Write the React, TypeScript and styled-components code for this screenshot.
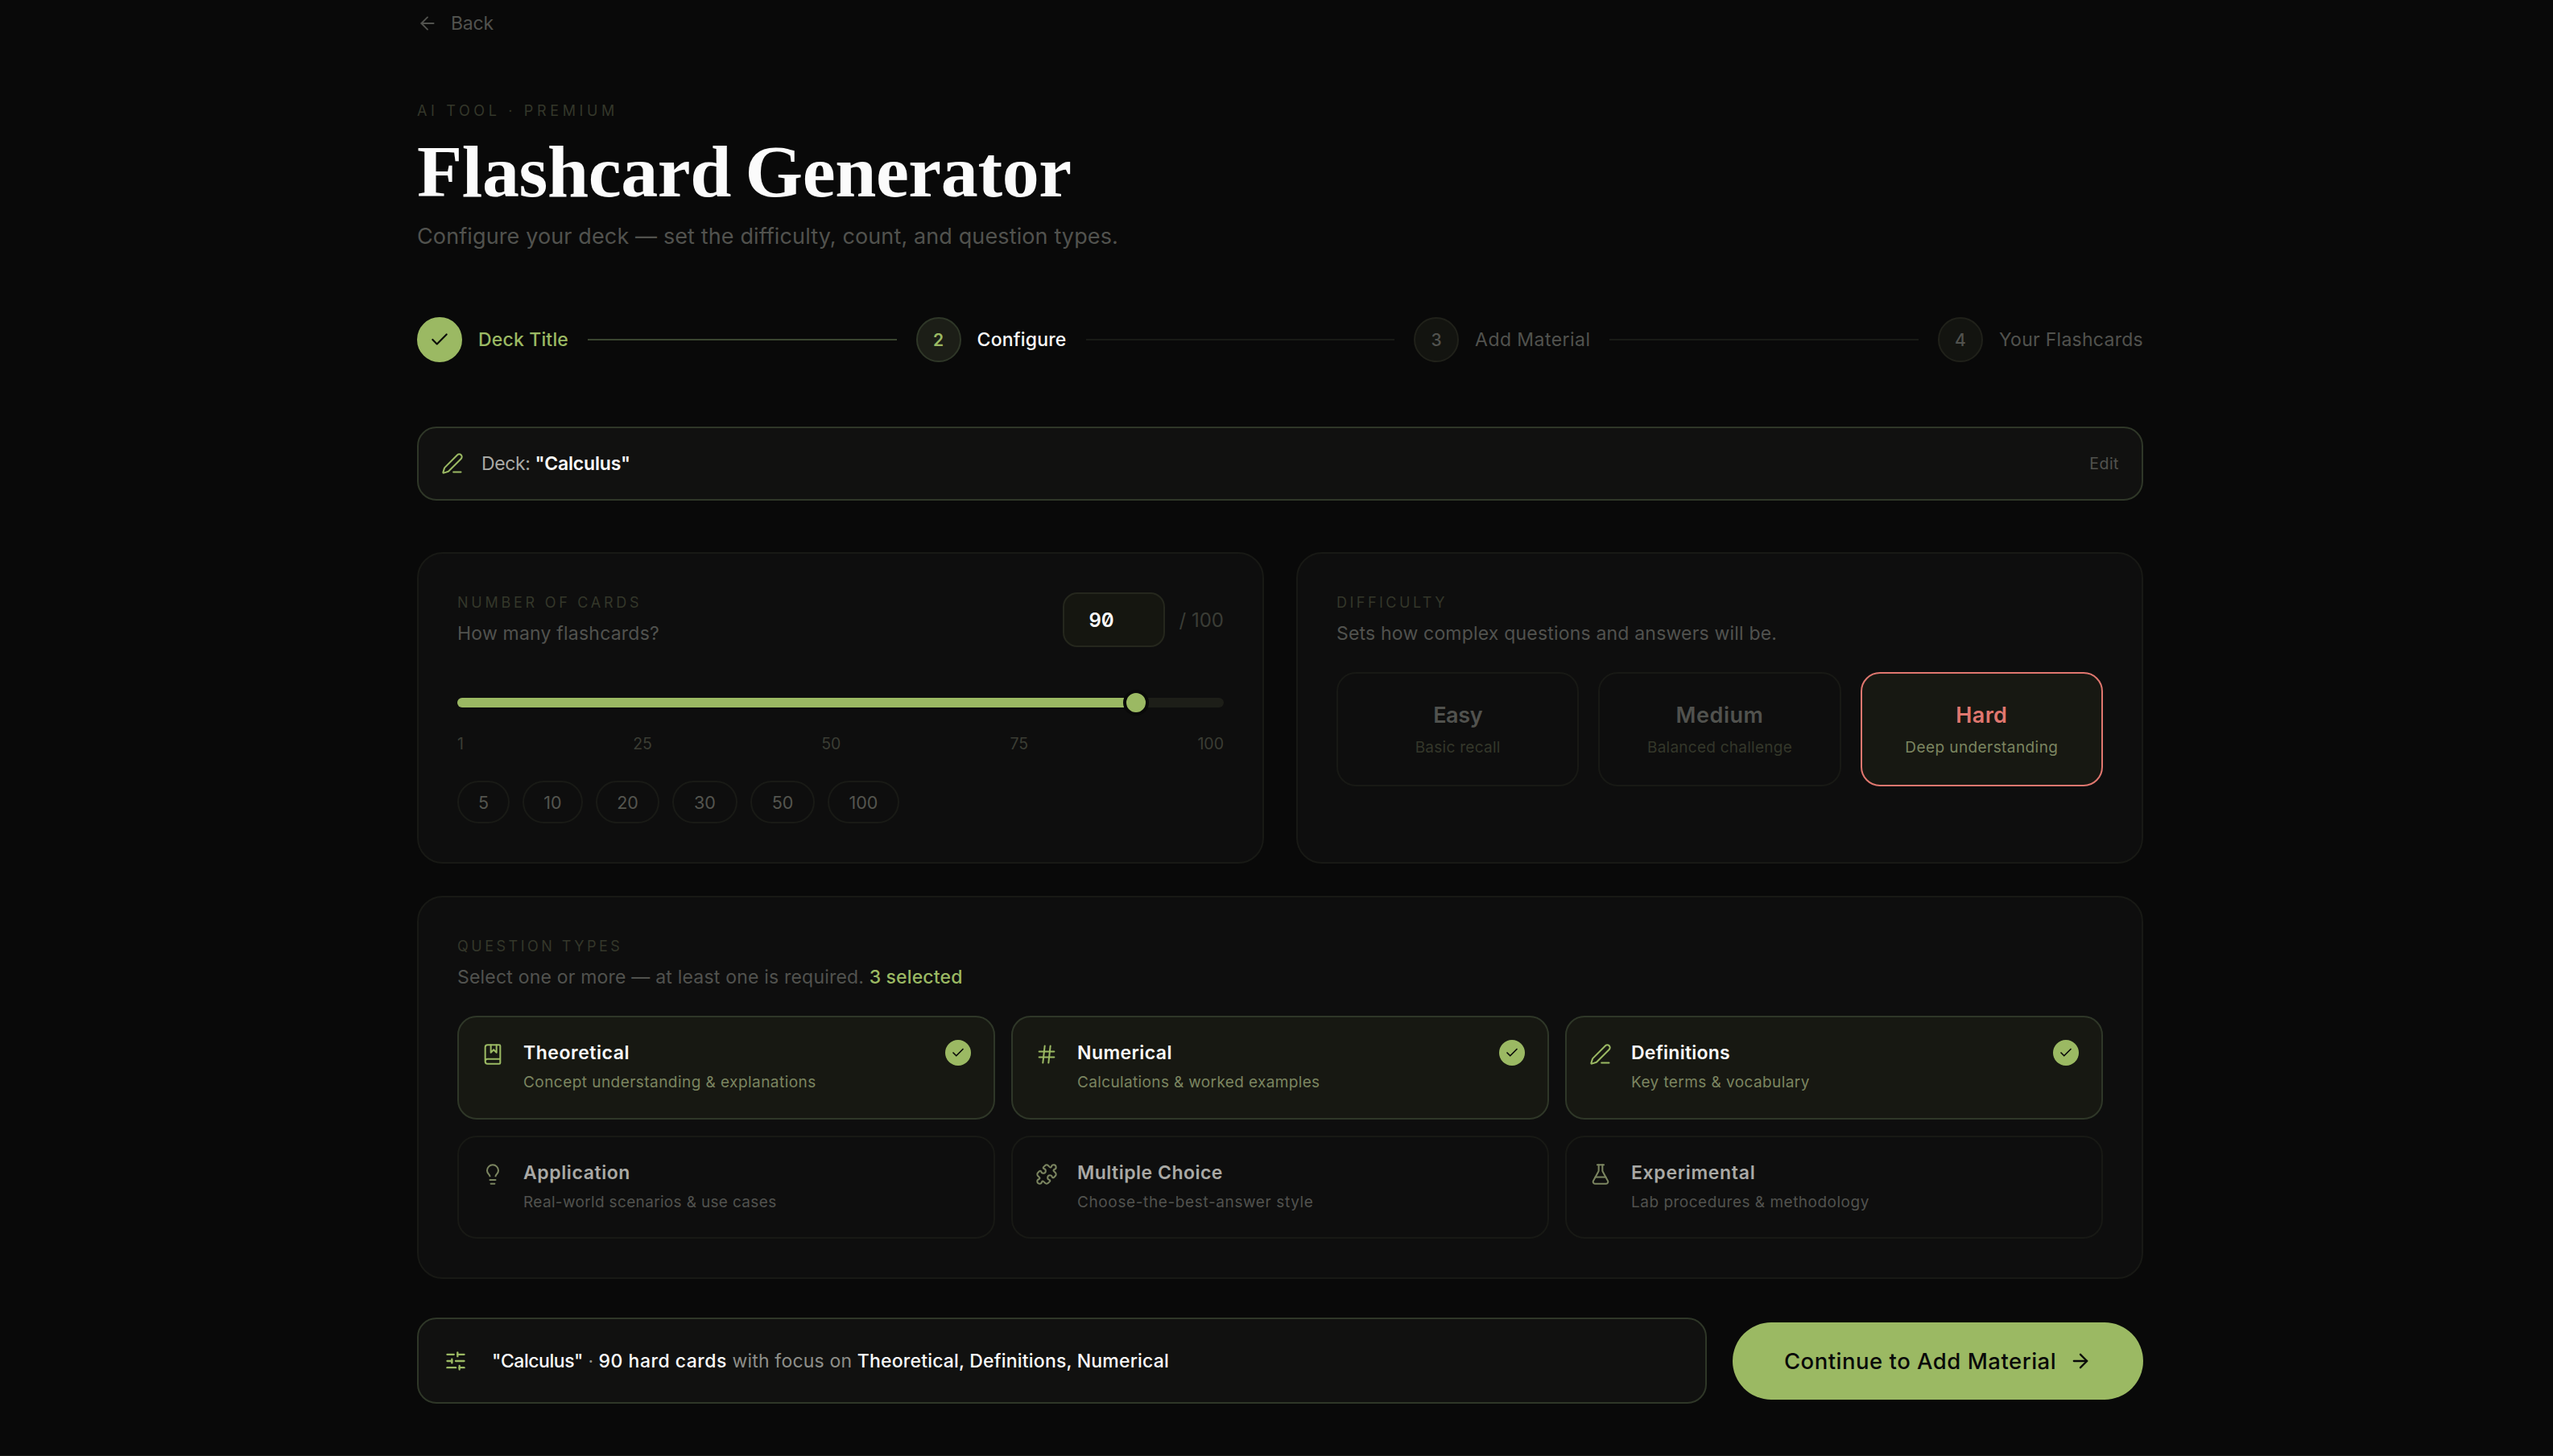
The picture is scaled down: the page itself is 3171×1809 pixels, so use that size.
import React from 'react';
import styled, { createGlobalStyle } from 'styled-components';
import {
  ArrowLeft, ArrowRight, BookMarked, Check, FlaskConical, Hash, Lightbulb, PenLine, Puzzle, SlidersHorizontal,
} from 'lucide-react';

const c = {
  bg: '#090909', card: '#0e0e0e', raised: '#111110', active: '#171812', line: '#191a16', lineActive: '#2f3728',
  green: '#9bb963', white: '#fbfbfb', soft: '#a9a9a5', grey: '#51524e', dim: '#34372a', olive: '#7b8560', red: '#e0776f',
};

const Global = createGlobalStyle`
  *, *::before, *::after { box-sizing: border-box; }
  body { margin: 0; background: ${c.bg}; color: ${c.white}; font-family: Inter, "Liberation Sans", sans-serif; }
  button { font: inherit; color: inherit; background: none; border: 0; padding: 0; }
  p, h1, h2 { margin: 0; font-weight: 400; }
`;

const Page = styled.div`height: 1809px; overflow: hidden; border-bottom: 1px solid ${c.line};`;
const Main = styled.main`width: 2144px; margin-left: 518px; display: flex; flex-direction: column;`;

/* A run of text with its own tracking, in pixels. */
const Run = styled.span<{ $ls: number }>`letter-spacing: ${p => p.$ls}px; white-space: nowrap;`;

const Back = styled.button`
  height: 57px; display: flex; align-items: center; gap: 16px; align-self: flex-start;
  font-size: 23px; color: ${c.grey};
`;
const Eyebrow = styled.p`margin-top: 67px; font-size: 18px; line-height: 28px; color: ${c.dim};`;
const Title = styled.h1`
  font-family: "Liberation Serif", serif; font-weight: 700; font-size: 92px; line-height: 92px; margin-top: 15px;
  word-spacing: -5px;
`;
const Subtitle = styled.p`font-size: 27px; line-height: 40px; margin-top: 15px; color: ${c.grey};`;

type StepState = 'done' | 'current' | 'todo';
const Steps = styled.div`display: flex; align-items: center; margin-top: 80px; height: 56px;`;
const Step = styled.div`display: flex; align-items: center; gap: 20px;`;
const StepDot = styled.div<{ $s: StepState }>`
  width: 56px; height: 56px; border-radius: 50%; display: grid; place-items: center; font-size: 21px;
  font-weight: ${p => (p.$s === 'current' ? 600 : 500)};
  border: 2px solid ${p => (p.$s === 'done' ? c.green : p.$s === 'current' ? c.lineActive : '#20211a')};
  background: ${p => (p.$s === 'done' ? c.green : p.$s === 'current' ? '#1c1e17' : '#131410')};
  color: ${p => (p.$s === 'done' ? c.bg : p.$s === 'current' ? c.green : c.grey)};
`;
const StepLabel = styled.span<{ $s: StepState }>`
  font-size: 23px; font-weight: ${p => (p.$s === 'todo' ? 400 : 500)};
  color: ${p => (p.$s === 'done' ? c.green : p.$s === 'current' ? c.white : c.grey)};
`;
const StepLine = styled.div<{ $on?: boolean }>`
  flex: 1; height: 2px; margin: 0 24px; background: ${p => (p.$on ? '#3a4530' : c.line)};
`;

const DeckBar = styled.section`
  margin-top: 80px; height: 92px; border: 2px solid ${c.lineActive}; border-radius: 24px; background: ${c.raised};
  padding: 0 28px; display: flex; align-items: center; font-size: 23px; color: ${c.soft};
  svg { color: ${c.green}; margin-right: 22px; }
`;
const Strong = styled.span<{ $w?: number }>`color: ${c.white}; font-weight: ${p => p.$w ?? 600};`;
const Edit = styled.button`margin-left: auto; font-size: 19.5px; color: ${c.grey};`;

const Pair = styled.div`display: grid; grid-template-columns: 1fr 1fr; gap: 40px; margin-top: 64px;`;
const Card = styled.section<{ $h: number; $mt?: number }>`
  height: ${p => p.$h}px; margin-top: ${p => p.$mt ?? 0}px; padding: 48px; border: 2px solid #181915;
  border-radius: 32px; background: ${c.card};
`;
const CardHead = styled.div`display: flex; justify-content: space-between; height: 68px;`;
const Label = styled.h2`font-size: 18px; line-height: 24px; padding-top: 1px; color: ${c.dim};`;
const Hint = styled.p`font-size: 23px; line-height: 36px; margin-top: 8px; color: ${c.grey};`;
const Selected = styled.span`color: ${c.green}; font-weight: 500;`;

const Count = styled.div`display: flex; align-items: center; gap: 18px; font-size: 24px; color: #3b3d36;`;
const CountBox = styled.div`
  width: 127px; height: 68px; border: 2px solid #25271d; border-radius: 18px; background: #151610; padding-left: 31px;
  display: flex; align-items: center; font-size: 24px; font-weight: 600; color: ${c.white};
  font-feature-settings: "zero";
`;
const Slider = styled.div`position: relative; height: 32px; margin-top: 53px; display: flex; align-items: center;`;
const Rail = styled.div`width: 100%; height: 12px; border-radius: 6px; background: #1d1e18; overflow: hidden;`;
const Fill = styled.div`height: 100%; background: ${c.green};`;
const Thumb = styled.div`
  position: absolute; top: 0; width: 32px; height: 32px; margin-left: -16px; border-radius: 50%;
  border: 4px solid ${c.bg}; background: ${c.green};
`;
const Ticks = styled.div`
  display: flex; justify-content: space-between; margin-top: 23px; font-size: 19.5px; line-height: 24px; color: #3b3d34;
`;
const Chips = styled.div`display: flex; gap: 16px; margin-top: 34px;`;
const Chip = styled.button<{ $w: number }>`
  width: ${p => p.$w}px; height: 53px; border: 2px solid ${c.line}; border-radius: 27px; font-size: 21.5px; color: #54554f;
`;

const Levels = styled.div`display: grid; grid-template-columns: repeat(3, 1fr); gap: 24px; margin-top: 31px;`;
const Level = styled.button<{ $on?: boolean }>`
  height: 142px; border-radius: 24px; border: 2px solid ${p => (p.$on ? c.red : '#181915')};
  background: ${p => (p.$on ? c.active : 'transparent')};
  display: flex; flex-direction: column; align-items: center; justify-content: center; gap: 8px; padding-top: 2px;
`;
const LevelName = styled.span<{ $on?: boolean }>`
  font-size: 27px; line-height: 36px; font-weight: 600; color: ${p => (p.$on ? c.red : c.grey)};
`;
const LevelNote = styled.span<{ $on?: boolean }>`
  font-size: 19px; line-height: 28px; color: ${p => (p.$on ? c.olive : c.dim)};
`;

const Types = styled.div`display: grid; grid-template-columns: repeat(3, 1fr); gap: 20px; margin-top: 30px;`;
const TypeCard = styled.button<{ $on?: boolean }>`
  height: 128.5px; border-radius: 24px; border: 2px solid ${p => (p.$on ? c.lineActive : '#181915')};
  background: ${p => (p.$on ? c.active : 'transparent')}; padding: 28px; display: flex; align-items: flex-start;
  text-align: left;
  > svg { margin: 4px 24px 0 0; color: ${p => (p.$on ? c.green : c.olive)}; }
`;
const TypeText = styled.div`flex: 1; display: flex; flex-direction: column; align-items: flex-start; gap: 7px;`;
const TypeName = styled.span<{ $on?: boolean }>`
  font-size: 23px; line-height: 32px; font-weight: 600; color: ${p => (p.$on ? c.white : c.soft)};
`;
const TypeNote = styled.span<{ $on?: boolean }>`
  font-size: 19px; line-height: 28px; color: ${p => (p.$on ? c.olive : c.grey)};
`;
const Badge = styled.div`
  width: 32px; height: 32px; border-radius: 50%; background: ${c.green}; color: ${c.bg}; display: grid; place-items: center;
`;

const Footer = styled.div`display: flex; align-items: center; gap: 32px; margin-top: 48px;`;
const Summary = styled.div`
  flex: 1; height: 107px; border: 2px solid ${c.lineActive}; border-radius: 24px; background: ${c.raised};
  padding: 0 32px; display: flex; align-items: center; font-size: 23px; color: #8d8e89;
  svg { color: ${c.green}; margin-right: 31px; }
`;
const Continue = styled.button`
  width: 510px; height: 96px; border-radius: 48px; background: ${c.green}; color: ${c.bg}; font-size: 27.5px;
  font-weight: 500; display: flex; align-items: center; justify-content: center; gap: 16px;
`;

const sw = 1.75;

const types = [
  { Icon: BookMarked, name: 'Theoretical', note: 'Concept understanding & explanations', on: true, ls: [0.54, 0.45] },
  { Icon: Hash, name: 'Numerical', note: 'Calculations & worked examples', on: true, ls: [0.43, 0.36] },
  { Icon: PenLine, name: 'Definitions', note: 'Key terms & vocabulary', on: true, ls: [0.25, 0.42] },
  { Icon: Lightbulb, name: 'Application', note: 'Real-world scenarios & use cases', on: false, ls: [0.59, 0.34] },
  { Icon: Puzzle, name: 'Multiple Choice', note: 'Choose-the-best-answer style', on: false, ls: [0.49, 0.62] },
  { Icon: FlaskConical, name: 'Experimental', note: 'Lab procedures & methodology', on: false, ls: [0.68, 0.5] },
];

const levels = [
  { name: 'Easy', note: 'Basic recall', on: false, ls: [-0.39, 0.27] },
  { name: 'Medium', note: 'Balanced challenge', on: false, ls: [0.56, 0.25] },
  { name: 'Hard', note: 'Deep understanding', on: true, ls: [0.35, 0.42] },
];

const steps: { name: string; state: StepState; ls: number }[] = [
  { name: 'Deck Title', state: 'done', ls: 0.17 },
  { name: 'Configure', state: 'current', ls: 0.19 },
  { name: 'Add Material', state: 'todo', ls: 0.45 },
  { name: 'Your Flashcards', state: 'todo', ls: 0.27 },
];

const presets = [[5, 65], [10, 75], [20, 79], [30, 81], [50, 80], [100, 89]];
const fill = '88.6%';

export default function App() {
  return (
    <Page>
      <Global />
      <Main>
        <Back><ArrowLeft size={26} strokeWidth={sw} /><Run $ls={-0.18}>Back</Run></Back>
        <Eyebrow><Run $ls={4.64}>AI TOOL · PREMIUM</Run></Eyebrow>
        <Title><Run $ls={-0.4}>Flashcard Generator</Run></Title>
        <Subtitle><Run $ls={0.12}>Configure your deck — set the difficulty, count, and question types.</Run></Subtitle>
        <Steps>
          {steps.map(({ name, state, ls }, i) => (
            <React.Fragment key={name}>
              {i > 0 && <StepLine $on={i === 1} />}
              <Step>
                <StepDot $s={state}>{state === 'done' ? <Check size={26} strokeWidth={2} /> : i + 1}</StepDot>
                <StepLabel $s={state}><Run $ls={ls}>{name}</Run></StepLabel>
              </Step>
            </React.Fragment>
          ))}
        </Steps>
        <DeckBar>
          <PenLine size={28} strokeWidth={sw} />
          <Run $ls={-0.4}>Deck:&nbsp;</Run><Strong><Run $ls={-0.2}>"Calculus"</Run></Strong>
          <Edit><Run $ls={0.5}>Edit</Run></Edit>
        </DeckBar>
        <Pair>
          <Card $h={387}>
            <CardHead>
              <div>
                <Label><Run $ls={3.74}>NUMBER OF CARDS</Run></Label>
                <Hint><Run $ls={0.21}>How many flashcards?</Run></Hint>
              </div>
              <Count><CountBox><Run $ls={-0.09}>90</Run></CountBox><Run $ls={0}>/ 100</Run></Count>
            </CardHead>
            <Slider>
              <Rail><Fill style={{ width: fill }} /></Rail>
              <Thumb style={{ left: fill }} />
            </Slider>
            <Ticks>{[1, 25, 50, 75, 100].map(t => <span key={t}>{t}</span>)}</Ticks>
            <Chips>{presets.map(([n, w]) => <Chip key={n} $w={w}>{n}</Chip>)}</Chips>
          </Card>
          <Card $h={387}>
            <CardHead>
              <div>
                <Label><Run $ls={3.49}>DIFFICULTY</Run></Label>
                <Hint><Run $ls={0.19}>Sets how complex questions and answers will be.</Run></Hint>
              </div>
            </CardHead>
            <Levels>
              {levels.map(({ name, note, on, ls }) => (
                <Level key={name} $on={on}>
                  <LevelName $on={on}><Run $ls={ls[0]}>{name}</Run></LevelName>
                  <LevelNote $on={on}><Run $ls={ls[1]}>{note}</Run></LevelNote>
                </Level>
              ))}
            </Levels>
          </Card>
        </Pair>
        <Card $h={476} $mt={40}>
          <Label><Run $ls={3.5}>QUESTION TYPES</Run></Label>
          <Hint>
            <Run $ls={0.2}>Select one or more — at least one is required.</Run>{' '}
            <Selected><Run $ls={0.16}>3 selected</Run></Selected>
          </Hint>
          <Types>
            {types.map(({ Icon, name, note, on, ls }) => (
              <TypeCard key={name} $on={on}>
                <Icon size={28} strokeWidth={sw} />
                <TypeText>
                  <TypeName $on={on}><Run $ls={ls[0]}>{name}</Run></TypeName>
                  <TypeNote $on={on}><Run $ls={ls[1]}>{note}</Run></TypeNote>
                </TypeText>
                {on && <Badge><Check size={18} strokeWidth={2.2} /></Badge>}
              </TypeCard>
            ))}
          </Types>
        </Card>
        <Footer>
          <Summary>
            <SlidersHorizontal size={28} strokeWidth={2} />
            <div>
              <Strong $w={500}><Run $ls={-0.45}>"Calculus"</Run></Strong> ·{' '}
              <Strong $w={500}><Run $ls={0.5}>90 hard cards</Run></Strong>{' '}
              <Run $ls={0.2}>with focus on</Run>{' '}
              <Strong $w={500}><Run $ls={0.19}>Theoretical, Definitions, Numerical</Run></Strong>
            </div>
          </Summary>
          <Continue><Run $ls={0.5}>Continue to Add Material</Run><ArrowRight size={28} strokeWidth={2} /></Continue>
        </Footer>
      </Main>
    </Page>
  );
}
